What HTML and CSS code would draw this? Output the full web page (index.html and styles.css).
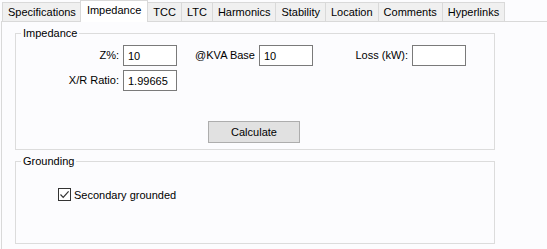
FILE: index.html
```html
<!DOCTYPE html>
<html lang="en">
<head>
  <meta charset="UTF-8" />
  <title>Transformer Properties</title>
  <link rel="stylesheet" href="styles.css">
</head>
<body>
  <div class="tabs">
    <div class="tab">Specifications</div>
    <div class="tab active">Impedance</div>
    <div class="tab">TCC</div>
    <div class="tab">LTC</div>
    <div class="tab">Harmonics</div>
    <div class="tab">Stability</div>
    <div class="tab">Location</div>
    <div class="tab">Comments</div>
    <div class="tab">Hyperlinks</div>
  </div>
  <div class="panel">
    <fieldset class="group impedance">
      <legend>Impedance</legend>
      <div class="fields">
        <label class="lbl">Z%:</label>
        <input class="box" type="text" value="10">
        <label class="lbl">@KVA Base</label>
        <input class="box" type="text" value="10">
        <label class="lbl">Loss (kW):</label>
        <input class="box" type="text" value="">
        <label class="lbl">X/R Ratio:</label>
        <input class="box" type="text" value="1.99665">
      </div>
      <div class="actions">
        <button class="btn">Calculate</button>
      </div>
    </fieldset>
    <fieldset class="group grounding">
      <legend>Grounding</legend>
      <label class="check">
        <span class="checkbox">
          <svg width="11" height="11" viewBox="0 0 11 11">
            <path d="M1.5 5.5 L4.2 8.3 L9.6 2.4" fill="none" stroke="#333" stroke-width="1.2"/>
          </svg>
        </span>
        Secondary grounded
      </label>
    </fieldset>
  </div>
</body>
</html>
```

FILE: styles.css
```css
html, body {
  height: 100%;
}
body {
  margin: 0;
  background-color: #fcfcfe;
  color: #000;
  font-family: 'Liberation Sans', Arial, sans-serif;
  font-size: 11px;
  overflow: hidden;
  display: flex;
  flex-direction: column;
}
.tabs {
  display: flex;
  align-items: flex-end;
  height: 21px;
  padding-left: 2px;
}
.tab {
  height: 18px;
  line-height: 18px;
  padding: 0 5px;
  background-color: #f0f0f0;
  border: 1px solid #d9d9d9;
  border-bottom: none;
  margin-right: -1px;
}
.tab.active {
  position: relative;
  z-index: 1;
  height: 21px;
  line-height: 19px;
  margin: 0 -1px -1px -1px;
  padding: 0 6px;
  background-color: #fff;
}
.panel {
  flex: 1;
  margin-left: 1px;
  border-top: 1px solid #d9d9d9;
  border-left: 1px solid #d9d9d9;
  padding: 5px 0 0 13px;
}
.group {
  width: 480px;
  margin: 0;
  padding: 0;
  border: 1px solid #dcdcdc;
  box-sizing: border-box;
}
.group legend {
  margin-left: 5px;
  padding: 0 2px;
  line-height: 13px;
}
.impedance {
  height: 123px;
}
.grounding {
  margin-top: 5px;
  height: 89px;
}
.fields {
  display: grid;
  grid-template-columns: 103px 54px 74px 54px 91px 54px;
  grid-auto-rows: 21px;
  column-gap: 4px;
  row-gap: 4px;
  margin-top: 5px;
}
.lbl {
  text-align: right;
  line-height: 21px;
}
.box {
  width: 54px;
  height: 21px;
  box-sizing: border-box;
  margin: 0;
  padding: 0 4px;
  border: 1px solid #7a7a7a;
  background: #fff;
  font: inherit;
  color: #000;
  outline: none;
}
.actions {
  padding: 30px 0 0 192px;
}
.btn {
  width: 92px;
  height: 22px;
  margin: 0;
  padding: 0;
  border: 1px solid #adadad;
  background-color: #e1e1e1;
  font: inherit;
  color: #000;
}
.check {
  display: flex;
  align-items: center;
  gap: 3px;
  margin: 20px 0 0 42px;
}
.checkbox {
  width: 11px;
  height: 11px;
  border: 1px solid #333;
  background: #fff;
  display: flex;
}
```
